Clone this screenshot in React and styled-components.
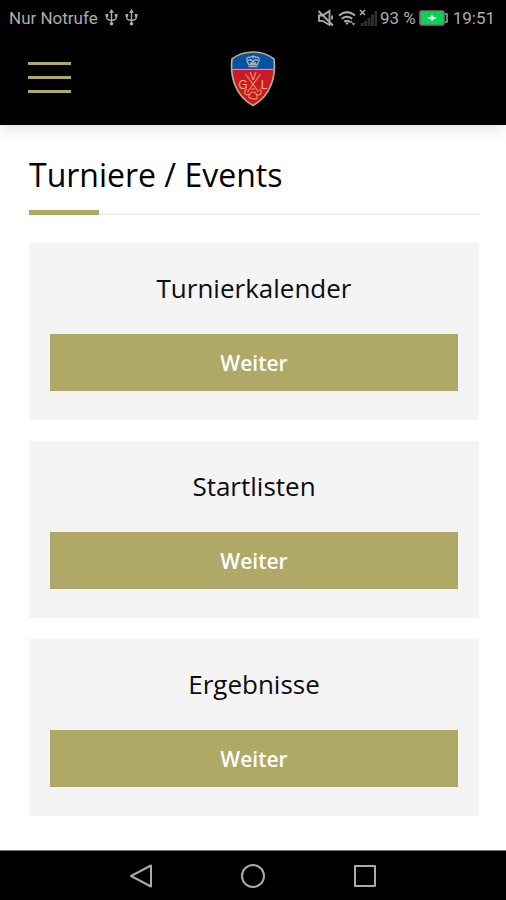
import React from "react";
import styled, { createGlobalStyle } from "styled-components";

const GlobalStyle = createGlobalStyle`
  * { box-sizing: border-box; }
  body { margin: 0; background: #fff; color: #0c0c10; font-family: "Open Sans", sans-serif; }
  button { font: inherit; color: inherit; background: none; border: 0; padding: 0; cursor: pointer; }
`;

const Screen = styled.div`
  min-height: 100vh;
  display: flex;
  flex-direction: column;
`;

const StatusBar = styled.div`
  height: 36px;
  padding: 0 11px 0 9px;
  display: flex;
  align-items: center;
  justify-content: space-between;
  background: #000;
  color: #adadad;
  font: 400 17px/36px Roboto, sans-serif;
`;

const StatusGroup = styled.div`
  display: flex;
  align-items: center;
  gap: ${(p) => p.$gap}px;
  white-space: nowrap;
`;

const Clock = styled.time`
  margin-left: 2px;
`;

const Icon = styled.svg`
  display: block;
  flex: none;
  fill: none;
  stroke: currentColor;
`;

const Header = styled.header`
  height: 89px;
  padding: 0 28px;
  display: grid;
  grid-template-columns: 1fr auto 1fr;
  align-items: start;
  background: #000;
  box-shadow: 0 4px 16px rgba(0, 0, 0, 0.12);
`;

const MenuButton = styled.button`
  width: 43px;
  margin-top: 26px;
  display: grid;
  gap: 11px;
`;

const MenuBar = styled.span`
  height: 3px;
  background: #b0a867;
`;

const LogoLink = styled.a`
  display: block;
  margin-top: 14px;
`;

const Main = styled.main`
  flex: 1;
  padding: 28px 27px 34px 29px;
`;

const PageTitle = styled.h1`
  margin: 0;
  font-size: 32px;
  line-height: 44px;
  font-weight: 400;
  color: #000;
`;

const Rule = styled.div`
  height: 6px;
  margin: 13px 0 27px;
  display: flex;
  align-items: flex-end;
  padding-bottom: 1px;
`;

const RuleAccent = styled.span`
  width: 70px;
  height: 5px;
  background: #b0a867;
`;

const RuleLine = styled.span`
  flex: 1;
  height: 2px;
  background: #f0f0f0;
`;

const CardList = styled.div`
  display: grid;
  gap: 21px;
`;

const Card = styled.section`
  padding: 27px 21px 29px;
  background: #f4f4f4;
  text-align: center;
`;

const CardTitle = styled.h2`
  margin: 0 0 28px;
  font-size: 26px;
  line-height: 36px;
  font-weight: 500;
`;

const CardButton = styled.button`
  && {
    width: 100%;
    height: 57px;
    display: block;
    background: #b0a867;
    color: #fff;
    font-size: 21px;
    font-weight: 600;
  }
`;

const NavBar = styled.nav`
  height: 50px;
  border-top: 1px solid #777;
  background: #000;
  display: flex;
  align-items: center;
  justify-content: center;
  gap: 84px;
`;

const NavButton = styled.button`
  && { color: #aaa; }
`;

function Usb() {
  return (
    <Icon width="13" height="18" viewBox="0 0 13 18" strokeWidth="1.4">
      <path d="M6.5 3v11M1.8 6.5v2.3q0 1.7 1.7 2l3 .8 3-.8q1.7-.3 1.7-2V6.5" />
      <path d="M6.5 0L9 3.8H4zM.5 5h2.7v2.7H.5zM9.8 5h2.7v2.7H9.8z" fill="currentColor" stroke="none" />
      <circle cx="6.5" cy="14.8" r="1.8" fill="currentColor" stroke="none" />
    </Icon>
  );
}

function Muted() {
  return (
    <Icon width="18" height="18" viewBox="0 0 18 18" strokeWidth="1.8">
      <path d="M2 6.5h3.500L12.500 2v14L5.500 11.800H2zM1.500 2l14.500 14.500M15 6.500v4" />
    </Icon>
  );
}

function Wifi() {
  return (
    <Icon width="18" height="16" viewBox="0 0 18 16" strokeWidth="2">
      <path d="M1 5.500Q9-1.300 17 5.500M3.700 8.800q5.300-4.200 10.600 0M6.200 11.800q2.800-2.200 5.600 0" />
      <path d="M7 12.500h4L9 15zM13 10.500l2 2.200h-4zM15.500 15.500l-2-2.200h4z" fill="currentColor" stroke="none" />
    </Icon>
  );
}

function Signal() {
  return (
    <Icon width="18" height="18" viewBox="0 0 18 18" strokeWidth="1.6">
      <path d="M1 1l5 5M6 1L1 6" />
      <path d="M3 17v-3M6.5 17v-5M10 17V9M13.5 17V5.5M17 17V2" stroke="#303030" strokeWidth="2.8" />
    </Icon>
  );
}

function Battery() {
  return (
    <Icon width="29" height="16" viewBox="0 0 29 16">
      <rect x="1" y="1" width="24" height="14" rx="1.5" fill="#0bd253" stroke="#777" strokeWidth="1.6" />
      <path d="M26 4h2v8h-2" stroke="#aaa" strokeWidth="1.4" />
      <path d="M8 8l4-1.4 1-2.1 1 2.1L18 8l-4 1.4-1 2.1-1-2.1z" fill="#e4ffe9" stroke="none" />
    </Icon>
  );
}

function Crest() {
  return (
    <Icon width="46" height="58" viewBox="0 0 46 58" role="img" aria-label="GVL">
      <defs>
        <clipPath id="shield">
          <path d="M23 2C15 2 8 4.300 2 9C0 26 5 46 23 55.500C41 46 46 26 44 9C38 4.300 31 2 23 2z" />
        </clipPath>
      </defs>
      <g clipPath="url(#shield)">
        <rect width="46" height="58" fill="#cb1925" />
        <rect width="46" height="19" fill="#07539d" />
        <path d="M0 19.300h46" stroke="#b9a980" strokeWidth="1.300" />
      </g>
      <path d="M23 2C15 2 8 4.300 2 9C0 26 5 46 23 55.500C41 46 46 26 44 9C38 4.300 31 2 23 2z" stroke="#b6ae91" strokeWidth="1.700" />
      <g stroke="#9fb0b8" strokeWidth="1.300">
        <path d="M18.500 16.500h9M18.500 14.500l-1.800-5Q17 6.500 20 7.500q3-2.800 6 0q3-1 3.300 2L27.500 14.500zM18 10.500q2.500-2 5 1q2.500-3 5-1M23 5.500v3M20 13h6" />
      </g>
      <g stroke="#dd9558" strokeWidth="1.200">
        <path d="M15.500 24L28.500 42M30.500 24L17.500 42" />
        <path d="M17 39q-3 1-2 4t5 1M29 39q3 1 2 4t-5 1M19 46q1-4 4-4t4 4-4 3-4-3M21 39h4" />
      </g>
      <g fill="#edb574" stroke="none" fontFamily="Liberation Sans, sans-serif" textAnchor="middle">
        <text x="23" y="30" fontSize="10">V</text>
        <text x="13" y="39" fontSize="12">G</text>
        <text x="34" y="39" fontSize="12">L</text>
      </g>
    </Icon>
  );
}

const cards = ["Turnierkalender", "Startlisten", "Ergebnisse"];

export default function App() {
  return (
    <Screen>
      <GlobalStyle />
      <StatusBar>
        <StatusGroup $gap={7}>
          <span>Nur Notrufe</span>
          <Usb />
          <Usb />
        </StatusGroup>
        <StatusGroup $gap={3}>
          <Muted />
          <Wifi />
          <Signal />
          <span>93 %</span>
          <Battery />
          <Clock>19:51</Clock>
        </StatusGroup>
      </StatusBar>
      <Header>
        <MenuButton aria-label="Menü">
          <MenuBar />
          <MenuBar />
          <MenuBar />
        </MenuButton>
        <LogoLink href="#" aria-label="GVL">
          <Crest />
        </LogoLink>
      </Header>
      <Main>
        <PageTitle>Turniere / Events</PageTitle>
        <Rule>
          <RuleAccent />
          <RuleLine />
        </Rule>
        <CardList>
          {cards.map((title) => (
            <Card key={title}>
              <CardTitle>{title}</CardTitle>
              <CardButton>Weiter</CardButton>
            </Card>
          ))}
        </CardList>
      </Main>
      <NavBar>
        <NavButton aria-label="Zurück">
          <Icon width="28" height="28" viewBox="0 0 28 28" strokeWidth="2" strokeLinejoin="round">
            <path d="M24 3.500v21L4 14z" />
          </Icon>
        </NavButton>
        <NavButton aria-label="Startseite">
          <Icon width="28" height="28" viewBox="0 0 28 28" strokeWidth="2">
            <circle cx="14" cy="14" r="11" />
          </Icon>
        </NavButton>
        <NavButton aria-label="Übersicht">
          <Icon width="28" height="28" viewBox="0 0 28 28" strokeWidth="2" strokeLinejoin="round">
            <rect x="4" y="4" width="20" height="20" />
          </Icon>
        </NavButton>
      </NavBar>
    </Screen>
  );
}
